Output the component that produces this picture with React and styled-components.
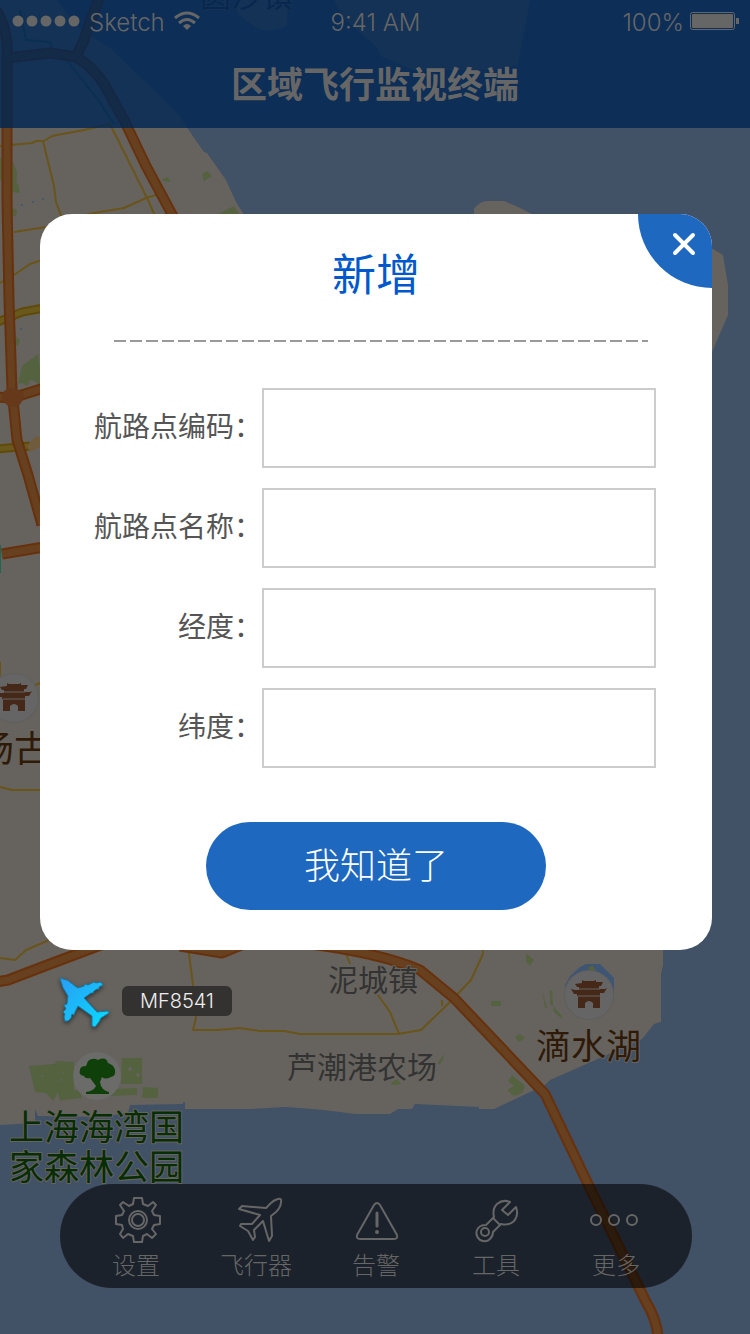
import React from "react";
import styled, { createGlobalStyle } from "styled-components";

const GlobalStyle = createGlobalStyle`
  *, *::before, *::after { box-sizing: border-box; }
  body { margin: 0; background: #415166; }
  body, button, input {
    font-family: "Noto Sans CJK SC", sans-serif;
  }
`;

const Screen = styled.div`
  position: relative;
  display: flex;
  flex-direction: column;
  min-height: 100vh;
  overflow: hidden;
`;

const MapCanvas = styled.svg`
  position: absolute;
  inset: 0;
  width: 100%;
  height: 100%;
`;

const Header = styled.header`
  position: relative;
  background: rgba(0, 37, 82, 0.8);
  color: #666;
`;

const StatusBar = styled.div`
  display: grid;
  grid-template-columns: 1fr auto 1fr;
  align-items: center;
  height: 44px;
  padding: 2px 11px 0 12px;
  font-family: Inter, sans-serif;
  font-size: 24px;
  font-weight: 300;
  line-height: 32px;
`;

const StatusGroup = styled.div`
  display: flex;
  align-items: center;
  justify-content: ${(p) => p.$align};
  gap: ${(p) => p.$gap};

  svg { margin-bottom: 4px; }
`;

const PageTitle = styled.h1`
  margin: 0;
  padding-bottom: 8px;
  font-size: 36px;
  font-weight: 700;
  line-height: 76px;
  text-align: center;
`;

const Main = styled.main`
  position: relative;
  flex: 1;
  padding: 86px 38px 40px 40px;
`;

const Dialog = styled.section`
  position: relative;
  overflow: hidden;
  padding: 28px 54px 40px;
  border-radius: 32px;
  background: #fff;
`;

const DialogTitle = styled.h2`
  margin: 0;
  color: #0059cc;
  font-size: 44px;
  font-weight: 400;
  line-height: 60px;
  text-align: center;
`;

const CloseButton = styled.button`
  position: absolute;
  top: 0;
  right: 0;
  display: flex;
  align-items: center;
  justify-content: center;
  width: 74px;
  height: 74px;
  padding: 0 0 14px 18px;
  border: 0;
  border-radius: 0 0 0 74px;
  background: #1e68c0;
  cursor: pointer;
`;

const DashedRule = styled.hr`
  height: 2px;
  margin: 38px 10px 46px 20px;
  border: 0;
  background: repeating-linear-gradient(90deg, #999 0 12px, transparent 12px 16px);
`;

const Form = styled.form`
  display: flex;
  flex-direction: column;
  gap: 20px;
`;

const Field = styled.div`
  display: grid;
  grid-template-columns: 168px 1fr;
  align-items: center;
  padding-right: 2px;
`;

const FieldLabel = styled.label`
  padding-bottom: 6px;
  color: #555;
  font-size: 28px;
  line-height: 40px;
  text-align: right;
`;

const FieldInput = styled.input`
  width: 100%;
  height: 80px;
  padding: 0 16px;
  border: 2px solid #ccc;
  border-radius: 0;
  background: #fff;
  color: #555;
  font-size: 28px;
`;

const ConfirmButton = styled.button`
  align-self: center;
  width: 340px;
  height: 88px;
  margin-top: 34px;
  padding: 0 0 6px;
  border: 0;
  border-radius: 44px;
  background: #1e68c0;
  color: #fff;
  font-size: 36px;
  font-weight: 300;
  line-height: 48px;
  cursor: pointer;
`;

const FlightMarker = styled.div`
  position: absolute;
  left: 58px;
  top: 976px;
  display: flex;
  align-items: center;
  gap: 12px;
`;

const FlightTag = styled.span`
  width: 110px;
  margin-bottom: 2px;
  border-radius: 6px;
  background: #333230;
  color: #eee;
  font-family: Inter, sans-serif;
  font-size: 20px;
  font-weight: 300;
  line-height: 30px;
  text-align: center;
`;

const TabBar = styled.nav`
  position: relative;
  display: flex;
  height: 104px;
  margin: 0 58px 46px 60px;
  padding: 0 16px;
  border-radius: 52px;
  background: rgba(0, 0, 0, 0.58);
`;

const TabButton = styled.button`
  display: flex;
  flex: 1;
  flex-direction: column;
  align-items: center;
  gap: 2px;
  padding: 12px 0 0;
  border: 0;
  background: none;
  color: #666;
  font-size: 24px;
  font-weight: 300;
  line-height: 36px;
  cursor: pointer;
`;

const TabIcon = styled.svg`
  width: 48px;
  height: 48px;
  fill: none;
  stroke: #666;
  stroke-width: 2;
  stroke-linejoin: round;
  stroke-linecap: round;
`;

const highways = [
  "M-4 10 Q9 30 7 58 L7 200 L9 300 L12 390 L14 410 L17 440 L28 475 L42 525",
  "M7 58 L50 53 L76 57 Q92 66 104 84 L124 120 L146 166 L174 218",
  "M76 57 L84 40 L90 22 L100 -4",
  "M-2 397 L12 398 L44 388",
  "M2 554 L44 547",
  "M-4 982 L8 980 L50 964 L114 940",
  "M180 946 L222 953 L244 944",
  "M310 944 Q380 953 420 970 L454 998 L545 1094 L588 1184 L646 1302 Q656 1318 658 1336",
];

const streets = [
  "M0 146 L32 143 L36 141 L44 141 L52 136 L84 130 L110 124",
  "M43 141 L54 186 L56 202 L62 218",
  "M110 124 L134 172 L148 200 L156 218",
  "M58 220 L100 212 L124 208 L146 198 L156 195",
  "M14 232 L46 227",
  "M0 283 L14 275 L30 264 L42 260",
  "M0 662 L0 676",
  "M34 686 L42 682",
  "M0 787 L12 790 L44 790",
  "M0 958 L15 960 L26 950 L54 938",
  "M188 946 L193 985 L196 1018 L193 1030 L218 1030 L240 1028 L260 1031 L284 1031 L300 1034 L398 1034 L421 1030 L450 1002 L471 980 L483 954 L483 944",
  "M344 948 L350 964",
  "M378 995 L390 1012 L399 1034",
  "M442 1000 L442 1006",
];

const greens = [
  "M0 158 L12 160 L17 172 L16 190 L0 180 Z",
  "M13 184 L18 184 L20 193 L12 192 Z",
  "M13 208 L17 210 L16 216 L12 216 Z",
  "M162 179 L168 177 L171 182 L163 181 Z",
  "M202 174 L207 171 L212 176 L204 181 Z",
  "M214 216 L234 206 L240 216 Z",
  "M16 336 L20 340 L18 346 L15 344 Z",
  "M22 366 L38 354 L42 386 L32 380 L18 384 Z",
  "M20 382 L30 378 L28 386 Z",
  "M29 1066 L55 1064 L56 1061 L74 1062 L74 1096 L60 1101 L58 1092 L53 1101 L46 1093 L35 1092 Z",
  "M122 1058 L142 1058 L142 1084 L121 1084 Z",
  "M59 1092 L80 1090 L82 1098 L62 1100 Z",
  "M112 1089 L137 1088 L137 1095 L110 1096 Z",
  "M143 1087 L158 1088 L158 1098 L142 1098 Z",
  "M526 953 L534 960 L530 966 L526 962 Z",
  "M491 1001 H501 V1006 H491 Z",
  "M542 990 L547 1008 L545 1008 Z",
  "M550 990 H552 L553 1006 L550 1004 Z",
  "M553 1006 L562 1016 L562 1019 L554 1012 Z",
  "M515 1037 L520 1034 L525 1038 L519 1042 Z",
  "M508 1081 L512 1075 L525 1086 L522 1093 L514 1096 L507 1090 L514 1086 Z",
  "M438 1062 L444 1054 L443 1060 L439 1065 Z",
  "M391 1083 L397 1079 L401 1084 L394 1085 Z",
];

function Pagoda({ x, y }) {
  return (
    <g transform={`translate(${x} ${y})`}>
      <circle r="25" fill="#605f5c" />
      <circle r="24" fill="#666565" />
      <path
        fill="#452817"
        d="M-7-15 l2 1 h10 l2-1 v2 h7 l-2 4 h-2 v3 h6 l2-1 l-3 5 h-4 v2 H11 V13 H4 V8 Q0 4-4 8 V13 H-11 V1 H-12 V-1 H-15 L-18-6 L-14-5 H-10 V-8 H-12 L-14-11 L-7-12 Z"
      />
      <path d="M-11-6 H11 M-11 1 H11" stroke="#666565" strokeWidth="1" />
    </g>
  );
}

function MapLabel({ x, y, size, color, lines }) {
  return (
    <text
      y={y}
      fontSize={size}
      fill={color}
      stroke="#66635e"
      strokeWidth="2"
      strokeLinejoin="round"
      paintOrder="stroke"
      fontFamily='"Noto Sans CJK SC", sans-serif'
    >
      {lines.map((line, i) => (
        <tspan key={line} x={x} dy={i * 40}>{line}</tspan>
      ))}
    </text>
  );
}

function Map() {
  return (
    <MapCanvas viewBox="0 0 750 1334" preserveAspectRatio="xMidYMin slice" role="img" aria-label="地图">
      <rect width="750" height="1334" fill="#415166" />
      <g fill="#66635e">
        <path d="M0 0 H58 L70 18 L84 32 L110 48 L150 86 L180 116 L190 132 L204 152 L207 153 L226 180 L236 202 L246 218 L400 400 L663 800 V965 L661 974 V1022 L654 1024 L642 1039 L600 1058 L550 1080 L545 1085 L494 1109 L479 1109 V1107 L415 1104 L412 1109 H398 L390 1114 H355 Q322 1109 285 1107 L250 1109 H185 V1102 H183 V1104 L130 1105 L128 1113 L100 1117 L38 1116 L35 1109 V1123 L0 1125 Z" />
        <path d="M236 0 H288 L287 26 Q270 34 256 28 L238 14 Z" />
        <path d="M334 0 H530 L518 65 L490 70 L412 70 L398 63 L380 56 L378 49 L362 34 L345 20 Z" />
        <path d="M474 218 V209 Q480 201 487 201 H504 L518 207 L540 218 Z" />
        <path d="M705 246 L713 249 L723 255 L728 285 V315 L712 352 H700 Z" />
      </g>
      <g fill="#54623f">
        {greens.map((d) => <path key={d} d={d} />)}
      </g>
      <g fill="#66635e">
        <circle cx="42" cy="1076" r="1" />
        <circle cx="61" cy="1080" r="1" />
        <circle cx="64" cy="1072" r="1" />
        <circle cx="130" cy="1069" r="2" />
        <circle cx="138" cy="1075" r="2" />
      </g>
      <g fill="#3e5676">
        <circle cx="22" cy="205" r="1" />
        <circle cx="33" cy="202" r="1" />
        <circle cx="43" cy="199" r="1" />
        <circle cx="21" cy="329" r="1" />
      </g>
      <path d="M20 10 L26 40 L50 42 L52 48 M68 62 L98 100 L114 124" fill="none" stroke="#2e564b" strokeWidth="2" />
      <g fill="none" stroke="#69541a" strokeWidth="2" strokeLinejoin="round">
        {streets.map((d) => <path key={d} d={d} />)}
      </g>
      <path d="M27 476 L30 495 L36 516" fill="none" stroke="#665200" strokeWidth="3" />
      <g fill="none">
        <path d="M-2 322 L22 312 L44 308 M-2 449 L30 446" stroke="#5f4a08" strokeWidth="9" />
        <path d="M-2 322 L22 312 L44 308 M-2 449 L30 446" stroke="#6a591d" strokeWidth="5" />
      </g>
      <g fill="none" stroke="#67310d" strokeWidth="11" strokeLinejoin="round">
        {highways.map((d) => <path key={d} d={d} />)}
      </g>
      <g fill="none" stroke="#67401f" strokeWidth="7" strokeLinejoin="round">
        {highways.map((d) => <path key={d} d={d} />)}
      </g>
      <path d="M3 392 L8 388 L17 389 L24 393 L23 400 L18 407 L8 406 L2 400 Z" fill="#65391a" />
      <path d="M27 446 L36 436 L42 438 V446 L30 452 Z" fill="#705b3c" />
      <rect x="0" y="545" width="1" height="28" fill="#206651" />
      <path d="M565 1000 V985 L570 976 L580 967 L586 964 H600 L614 978 V1000 L603 1010 H575 Z" fill="#3e5574" />
      <path d="M588 968 L592 965 L596 970 L590 972 Z" fill="#54623f" />
      <Pagoda x="14" y="698" />
      <Pagoda x="589" y="995" />
      <circle cx="97" cy="1076" r="24" fill="#6b6b69" />
      <path
        fill="#10400a"
        d="M88 1061 Q93 1057 98 1060 Q106 1056 108 1063 Q114 1065 115 1070 Q116 1076 111 1077 Q105 1080 102 1077 L100 1082 Q101 1090 109 1092 V1094 H86 V1092 Q94 1091 96 1086 L90 1078 Q85 1079 84 1076 Q78 1075 80 1070 Q80 1066 86 1066 Z"
      />
      <MapLabel x="200" y="7" size="31" color="#26313f" lines={["圆沙镇"]} />
      <MapLabel x="-22" y="762" size="36" color="#2f1a08" lines={["场古"]} />
      <MapLabel x="328" y="991" size="30" color="#333" lines={["泥城镇"]} />
      <MapLabel x="287" y="1078" size="30" color="#333" lines={["芦潮港农场"]} />
      <MapLabel x="536" y="1059" size="35" color="#2f1a08" lines={["滴水湖"]} />
      <MapLabel x="9" y="1140" size="35" color="#062d04" lines={["上海海湾国", "家森林公园"]} />
    </MapCanvas>
  );
}

const fields = [
  { id: "code", label: "航路点编码：" },
  { id: "name", label: "航路点名称：" },
  { id: "longitude", label: "经度：" },
  { id: "latitude", label: "纬度：" },
];

const tabs = [
  {
    label: "设置",
    icon: (
      <g transform="translate(2 0)">
        <path d="M20 2 H28 L29 8 L34 10 L39 6 L42 9 L38 15 L40 19 L46 20 V28 L40 29 L38 33 L42 38 L38 42 L33 38 L29 40 L28 46 H20 L19 40 L14 38 L9 42 L6 38 L9 33 L8 29 L2 28 V20 L8 19 L10 15 L6 9 L9 6 L15 10 L19 8 Z" />
        <circle cx="24" cy="24" r="9" />
        <circle cx="24" cy="24" r="6" />
      </g>
    ),
  },
  {
    label: "飞行器",
    icon: (
      <path transform="translate(4 0)" d="M42 3 Q46 2 45 6 Q45 11 40 16 L35 20 L36 40 L33 45 L27 25 L18 34 L19 41 L17 44 L12 35 L4 30 L5 28 L16 28 L24 19 L3 13 L6 10 L30 12 L35 7 Q38 4 42 3 Z" />
    ),
  },
  {
    label: "告警",
    icon: (
      <g transform="translate(1 0)">
        <path d="M21 9 Q24 5 27 9 L44 39 Q45 43 41 43 H7 Q3 43 4 39 Z" />
        <path d="M24 17 V30" strokeWidth="3" />
        <circle cx="24" cy="36" r="2" fill="#666" stroke="none" />
      </g>
    ),
  },
  {
    label: "工具",
    icon: (
      <g transform="translate(1 0)">
        <path d="M37 6 Q30 3 24 8 Q19 13 21 21 L13 29 Q6 29 4 34 Q2 40 7 44 Q13 47 17 43 Q20 40 20 36 L28 28 Q36 30 41 25 Q46 19 43 11 L35 19 L29 14 Z" />
        <path d="M20 22 L27 29" />
        <circle cx="12" cy="36" r="4" />
      </g>
    ),
  },
  {
    label: "更多",
    icon: (
      <g transform="translate(-2 0)">
        <circle cx="6" cy="24" r="5" />
        <circle cx="24" cy="24" r="5" />
        <circle cx="42" cy="24" r="5" />
      </g>
    ),
  },
];

export default function App() {
  return (
    <Screen>
      <GlobalStyle />
      <Map />
      <Header>
        <StatusBar>
          <StatusGroup $align="flex-start" $gap="9px">
            <svg width="68" height="12" viewBox="0 0 68 12" fill="#666" aria-hidden="true">
              {[6, 20, 34, 48, 62].map((x) => <circle key={x} cx={x} cy="6" r="5.5" />)}
            </svg>
            <span>Sketch</span>
            <svg width="26" height="20" viewBox="0 0 26 20" fill="none" stroke="#666" strokeWidth="3" aria-hidden="true">
              <path d="M1 7 Q13 -3 25 7 M5 12 Q13 5 21 12" />
              <path d="M9 15 Q13 11 17 15 L13 19 Z" fill="#666" stroke="none" />
            </svg>
          </StatusGroup>
          <span>9:41 AM</span>
          <StatusGroup $align="flex-end" $gap="6px">
            <span>100%</span>
            <svg width="49" height="20" viewBox="0 0 49 20" aria-hidden="true">
              <rect x="0.5" y="1.5" width="44" height="17" rx="2" fill="none" stroke="#666" />
              <rect x="2" y="3" width="41" height="14" rx="1" fill="#666" />
              <path d="M46 7 H49 V13 H46 Z" fill="#666" />
            </svg>
          </StatusGroup>
        </StatusBar>
        <PageTitle>区域飞行监视终端</PageTitle>
      </Header>
      <Main>
        <Dialog role="dialog" aria-labelledby="dialog-title">
          <CloseButton type="button" aria-label="关闭">
            <svg width="24" height="24" viewBox="0 0 24 24" stroke="#fff" strokeWidth="4" strokeLinecap="round" aria-hidden="true">
              <path d="M3 3 L21 21 M21 3 L3 21" />
            </svg>
          </CloseButton>
          <DialogTitle id="dialog-title">新增</DialogTitle>
          <DashedRule />
          <Form onSubmit={(e) => e.preventDefault()}>
            {fields.map((f) => (
              <Field key={f.id}>
                <FieldLabel htmlFor={f.id}>{f.label}</FieldLabel>
                <FieldInput id={f.id} type="text" />
              </Field>
            ))}
            <ConfirmButton type="submit">我知道了</ConfirmButton>
          </Form>
        </Dialog>
      </Main>
      <FlightMarker>
        <svg width="52" height="52" viewBox="0 0 52 52" overflow="visible" aria-hidden="true">
          <defs>
            <linearGradient id="plane" x1="0" y1="0" x2="1" y2="1">
              <stop offset="0" stopColor="#2a9df4" />
              <stop offset="1" stopColor="#08dcff" />
            </linearGradient>
          </defs>
          <path
            d="M2 2 Q10 3 17 10 L20 12 L26 10 L27 8 L30 9 L34 7 L36 6 L38 7 L43 6 L45 9 L41 11 L41 13 L39 13 L36 15 L35 17 L33 17 L26 22 L39 36 L50 35 L51 37 L43 42 L41 46 L37 51 L34 50 L34 40 L20 30 L17 36 L16 39 L14 38 L13 42 L10 45 L7 45 L6 41 L7 38 L5 36 L8 33 L6 29 L9 28 L10 20 Q4 12 2 2 Z"
            fill="url(#plane)"
            stroke="#167aa6"
            strokeWidth="1"
            strokeLinejoin="round"
            filter="drop-shadow(0 2px 2px rgba(0,0,0,.5))"
          />
        </svg>
        <FlightTag>MF8541</FlightTag>
      </FlightMarker>
      <TabBar aria-label="主导航">
        {tabs.map((t) => (
          <TabButton key={t.label} type="button">
            <TabIcon viewBox="0 0 48 48" overflow="visible" aria-hidden="true">{t.icon}</TabIcon>
            {t.label}
          </TabButton>
        ))}
      </TabBar>
    </Screen>
  );
}
